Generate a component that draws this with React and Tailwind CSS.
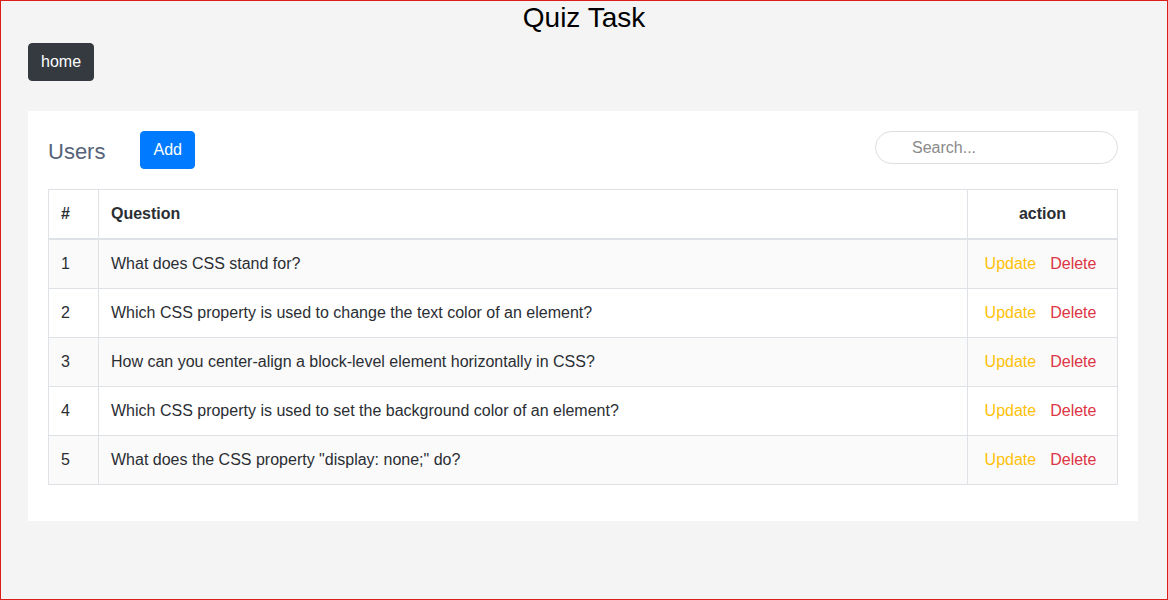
import React from "react";

const rows = [
  "What does CSS stand for?",
  "Which CSS property is used to change the text color of an element?",
  "How can you center-align a block-level element horizontally in CSS?",
  "Which CSS property is used to set the background color of an element?",
  'What does the CSS property "display: none;" do?',
];

export default function App() {
  return (
    <div
      className="h-[600px] w-[1168px] border border-[#e01b1b] bg-[#f4f4f4] text-[#2a2e33]"
      style={{ fontFamily: '"Liberation Sans", Arial, sans-serif' }}
    >
      <h1 className="text-center text-[28px] leading-[34px] font-normal text-black">Quiz Task</h1>
      <div className="ml-[12px] w-[1140px] px-[15px]">
        <button className="mt-2 rounded border border-[#343a40] bg-[#343a40] px-3 py-1.5 text-base leading-6 text-white">
          home
        </button>
        <div className="mt-[30px] bg-white px-5 pt-5 pb-9">
          <div className="mb-5 flex items-start">
            <div className="flex items-center">
              <span className="mr-[35px] mt-1 text-[22px] leading-[34px] text-[#566379]">Users</span>
              <button className="rounded border border-[#007bff] bg-[#007bff] px-3 py-1.5 text-base leading-6 text-white">
                Add
              </button>
            </div>
            <input
              placeholder="Search..."
              className="ml-auto h-[33px] w-[243px] rounded-full border border-[#dddddd] pl-9 text-base text-[#495057] placeholder:text-[#8a8a8a] outline-none"
            />
          </div>
          <table className="w-full border-collapse text-base leading-6">
            <thead>
              <tr>
                <th className="w-[50px] border border-[#dee2e6] border-b-2 px-3 py-3 text-left font-bold">#</th>
                <th className="border border-[#dee2e6] border-b-2 px-3 py-3 text-left font-bold">Question</th>
                <th className="w-[150px] border border-[#dee2e6] border-b-2 px-3 py-3 text-center font-bold">action</th>
              </tr>
            </thead>
            <tbody>
              {rows.map((q, i) => (
                <tr key={i} className={i % 2 === 0 ? "bg-[#fafafa]" : "bg-white"}>
                  <td className="border border-[#dee2e6] px-3 py-3">{i + 1}</td>
                  <td className="border border-[#dee2e6] px-3 py-3">{q}</td>
                  <td className="border border-[#dee2e6] px-3 py-3">
                    <div className="flex justify-center gap-[14px] pr-1">
                      <span className="text-[#ffc107]">Update</span>
                      <span className="text-[#dc3545]">Delete</span>
                    </div>
                  </td>
                </tr>
              ))}
            </tbody>
          </table>
        </div>
      </div>
    </div>
  );
}
